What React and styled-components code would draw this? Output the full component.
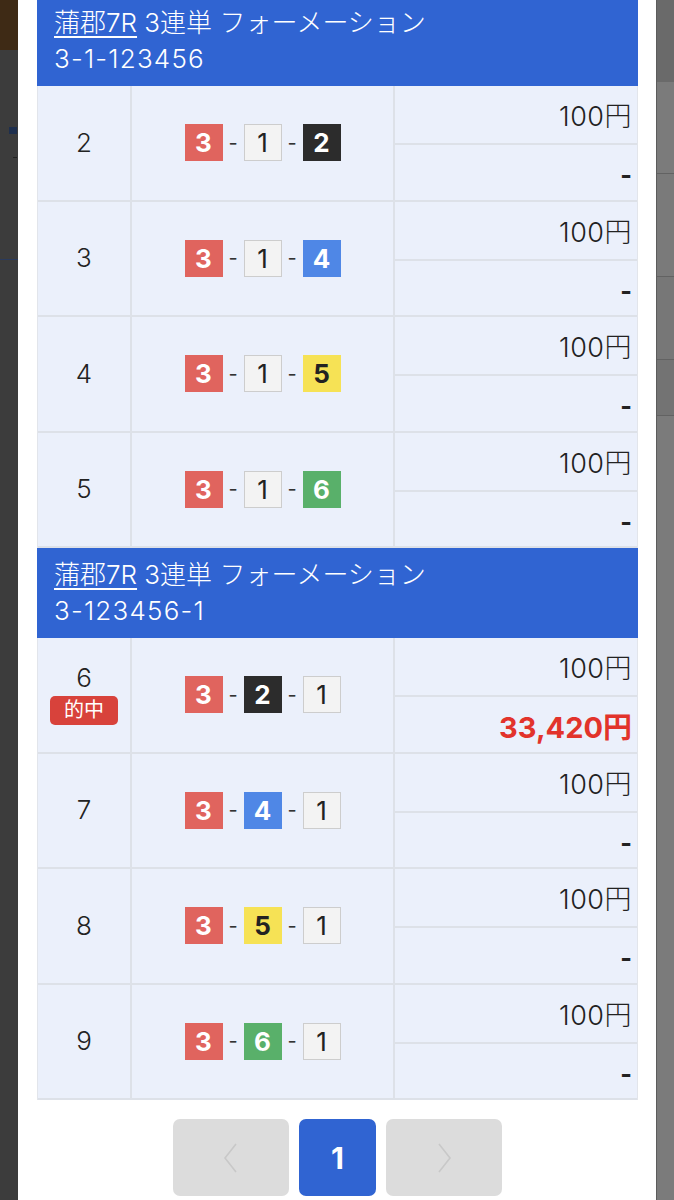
import React from 'react'
import styled, { createGlobalStyle } from 'styled-components'

const GlobalStyle = createGlobalStyle`
  body {
    margin: 0;
    background: #3b3b3b;
    font-family: Inter, "Noto Sans CJK JP", sans-serif;
  }
`

const bets = [
  {
    place: '蒲郡7R',
    type: '3連単 フォーメーション',
    combo: '3-1-123456',
    rows: [
      { no: 2, boats: [3, 1, 2], stake: '100円' },
      { no: 3, boats: [3, 1, 4], stake: '100円' },
      { no: 4, boats: [3, 1, 5], stake: '100円' },
      { no: 5, boats: [3, 1, 6], stake: '100円' },
    ],
  },
  {
    place: '蒲郡7R',
    type: '3連単 フォーメーション',
    combo: '3-123456-1',
    rows: [
      { no: 6, boats: [3, 2, 1], stake: '100円', payout: '33,420円', hit: true },
      { no: 7, boats: [3, 4, 1], stake: '100円' },
      { no: 8, boats: [3, 5, 1], stake: '100円' },
      { no: 9, boats: [3, 6, 1], stake: '100円' },
    ],
  },
]

const boatColors = {
  1: { bg: '#f3f3f3', fg: '#222', border: '#cdcdcd' },
  2: { bg: '#2c2c2c', fg: '#fff', border: '#2c2c2c' },
  3: { bg: '#e0645e', fg: '#fff', border: '#e0645e' },
  4: { bg: '#4f87e6', fg: '#fff', border: '#4f87e6' },
  5: { bg: '#f6e255', fg: '#222', border: '#f6e255' },
  6: { bg: '#59b06a', fg: '#fff', border: '#59b06a' },
}

function App() {
  return (
    <>
      <GlobalStyle />
      <Page>
        <LeftEdge>
          <BrownBlock />
          <NavyMark />
          <TinyDash />
          <EdgeLine />
        </LeftEdge>
        <Modal>
          <Table>
            {bets.map((bet, i) => (
              <Group key={i}>
                <Header>
                  <div>
                    <Place>{bet.place}</Place> {bet.type}
                  </div>
                  <Combo>{bet.combo}</Combo>
                </Header>
                {bet.rows.map((row) => (
                  <Row key={row.no}>
                    <NoCell>
                      <span>{row.no}</span>
                      {row.hit && <HitBadge>的中</HitBadge>}
                    </NoCell>
                    <ComboCell>
                      {row.boats.map((b, j) => (
                        <React.Fragment key={j}>
                          {j > 0 && <Dash>-</Dash>}
                          <Boat $n={b}>{b}</Boat>
                        </React.Fragment>
                      ))}
                    </ComboCell>
                    <AmountCell>
                      <Stake>{row.stake}</Stake>
                      <Payout $hit={row.hit}>{row.payout || '-'}</Payout>
                    </AmountCell>
                  </Row>
                ))}
              </Group>
            ))}
          </Table>
          <Pager>
            <PageButton $wide>
              <svg width="20" height="34" viewBox="0 0 20 34">
                <path d="M15 3 L4 17 L15 31" fill="none" stroke="#c8c8c8" strokeWidth="1.6" />
              </svg>
            </PageButton>
            <PageButton $active>1</PageButton>
            <PageButton $wide>
              <svg width="20" height="34" viewBox="0 0 20 34">
                <path d="M5 3 L16 17 L5 31" fill="none" stroke="#c8c8c8" strokeWidth="1.6" />
              </svg>
            </PageButton>
          </Pager>
        </Modal>
        <RightEdge>
          <GrayBand $h={82} $c="#6a6a6a" />
          <GrayBand $h={91} $c="#7b7b7b" />
          <GrayBand $h={102} $c="#7a7a7a" $line />
          <GrayBand $h={82} $c="#777777" $line />
          <GrayBand $h={55} $c="#737373" $line />
          <GrayBand $h={788} $c="#7b7b7b" $line />
        </RightEdge>
      </Page>
    </>
  )
}

const Page = styled.div`
  display: flex;
  height: 1200px;
  overflow: hidden;
`

const LeftEdge = styled.div`
  width: 18px;
  flex: none;
  background: #3c3c3c;
  display: flex;
  flex-direction: column;
`

const BrownBlock = styled.div`
  height: 50px;
  background: #3e2a15;
`

const NavyMark = styled.div`
  width: 8px;
  height: 7px;
  margin: 77px 0 0 9px;
  background: #1e2f4e;
`

const TinyDash = styled.div`
  width: 4px;
  height: 1px;
  margin: 23px 0 0 13px;
  background: #222;
`

const EdgeLine = styled.div`
  height: 1px;
  margin-top: 101px;
  background: #2a3a5c;
`

const RightEdge = styled.div`
  width: 17px;
  flex: none;
  border-left: 1px solid #5c5c5c;
  display: flex;
  flex-direction: column;
`

const GrayBand = styled.div`
  height: ${(p) => p.$h}px;
  flex: none;
  background: ${(p) => p.$c};
  border-top: ${(p) => (p.$line ? '1px solid #626262' : 'none')};
`

const Modal = styled.div`
  width: 638px;
  flex: none;
  box-sizing: border-box;
  background: #fff;
  padding: 0 18px 0 19px;
`

const Table = styled.div`
  margin-top: -4px;
  border-left: 1px solid #e2e5eb;
  border-right: 1px solid #e2e5eb;
`

const Group = styled.div``

const Header = styled.div`
  background: #3064d2;
  color: #fff;
  font-size: 26px;
  font-weight: 300;
  line-height: 36px;
  padding: 9px 17px;
  margin: 0 -1px;
`

const Combo = styled.div`
  letter-spacing: 1.2px;
`

const Place = styled.span`
  text-decoration: underline;
  text-underline-offset: 4px;
  text-decoration-thickness: 1.5px;
`

const Row = styled.div`
  display: grid;
  grid-template-columns: 92px 261px 1fr;
  column-gap: 2px;
  height: 113.5px;
  background: #dde1e8;
  border-bottom: 2px solid #dde1e8;
`

const Cell = styled.div`
  background: #ebf0fb;
  display: flex;
`

const NoCell = styled(Cell)`
  flex-direction: column;
  align-items: center;
  justify-content: center;
  gap: 4px;
  font-size: 26px;
  font-weight: 300;
  color: #222;
  line-height: 28px;
`

const HitBadge = styled.span`
  background: #d8423b;
  color: #fff;
  font-size: 20px;
  font-weight: 400;
  line-height: 29px;
  width: 68px;
  text-align: center;
  border-radius: 5px;
`

const ComboCell = styled(Cell)`
  align-items: center;
  justify-content: center;
`

const Boat = styled.span`
  width: 38px;
  height: 37px;
  box-sizing: border-box;
  display: flex;
  align-items: center;
  justify-content: center;
  background: ${(p) => boatColors[p.$n].bg};
  color: ${(p) => boatColors[p.$n].fg};
  border: 1.5px solid ${(p) => boatColors[p.$n].border};
  font-size: 26px;
  font-weight: ${(p) => (p.$n === 1 ? 400 : 700)};
`

const Dash = styled.span`
  width: 21px;
  text-align: center;
  font-size: 20px;
  color: #333;
`

const AmountCell = styled.div`
  display: grid;
  grid-template-rows: 57px 1fr;
  row-gap: 2px;
  background: #dde1e8;
`

const Stake = styled.div`
  background: #ebf0fb;
  display: flex;
  align-items: center;
  justify-content: flex-end;
  padding-right: 5px;
  font-size: 27px;
  font-weight: 300;
  letter-spacing: 0.5px;
  color: #222;
`

const Payout = styled(Stake)`
  font-weight: 700;
  letter-spacing: 0;
  font-size: ${(p) => (p.$hit ? '29px' : '25px')};
  color: ${(p) => (p.$hit ? '#e2332b' : '#222')};
  padding-top: ${(p) => (p.$hit ? '2px' : '6px')};
`

const Pager = styled.div`
  display: flex;
  justify-content: center;
  gap: 10px;
  margin-top: 19px;
`

const PageButton = styled.div`
  width: ${(p) => (p.$wide ? '116px' : '77px')};
  height: 77px;
  border-radius: 7px;
  background: ${(p) => (p.$active ? '#3064d2' : '#dcdcdc')};
  color: #fff;
  font-size: 30px;
  font-weight: 700;
  display: flex;
  align-items: center;
  justify-content: center;
`

export default App
